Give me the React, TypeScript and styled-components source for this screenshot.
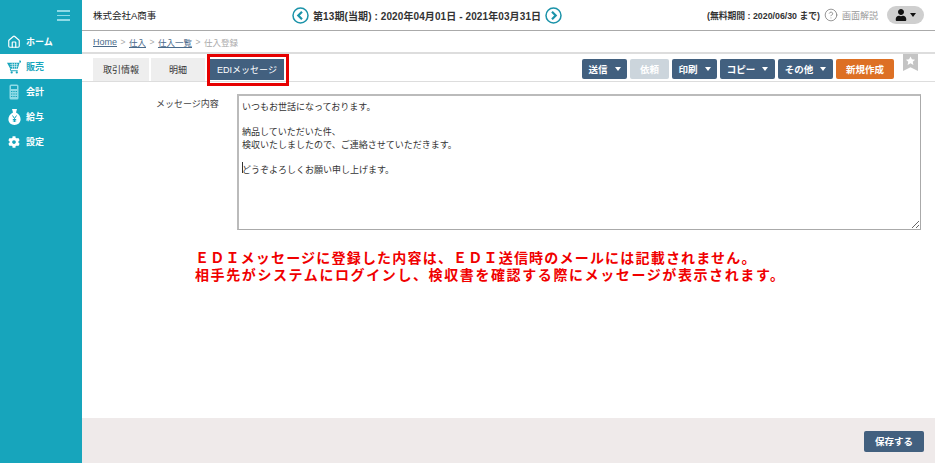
import React from "react";
import styled, { createGlobalStyle } from "styled-components";
import { Home, HelpCircle } from "lucide-react";
import { FaCog, FaUser } from "react-icons/fa";

const GlobalStyle = createGlobalStyle`
  html, body {
    margin: 0;
    padding: 0;
    background: #fff;
    font-family: "Liberation Sans", "Noto Sans CJK JP", sans-serif;
  }
  * { box-sizing: border-box; }
`;

const MoneyBag = () => (
  <svg width="13" height="16" viewBox="0 0 13 16">
    <path d="M4 0h5L8 3.400c2.800 1.200 4.600 3.900 4.600 6.900 0 3.400-2.700 5.700-6.100 5.700S.4 13.700.4 10.300c0-3 1.800-5.700 4.600-6.900z" fill="#fff" />
    <path d="M4.500 6.500l2 3 2-3M6.500 9.500v3.500M4.800 10.500h3.400M4.800 12h3.400" stroke="#17a5bc" strokeWidth="1" fill="none" />
  </svg>
);

const Cart = () => (
  <svg width="15" height="14" viewBox="0 0 15 14">
    <path d="M13 0.500l1.600.3-.9 1.700" fill="none" stroke="#17a5bc" strokeWidth="1.200" />
    <path d="M0 2.500h13.500L11.500 9H3.500z" fill="#17a5bc" />
    <path d="M3 4.500h9M3.500 6.500h8M5.500 2.500l.5 6.500M8 2.500V9M10.500 2.500L10 9" stroke="#fff" strokeWidth=".6" />
    <path d="M3.500 9l.5 2h7.500" fill="none" stroke="#17a5bc" strokeWidth="1" />
    <circle cx="5" cy="12.800" r="1.200" fill="#17a5bc" />
    <circle cx="10.500" cy="12.800" r="1.200" fill="#17a5bc" />
  </svg>
);

const Calculator = () => (
  <svg width="10" height="16" viewBox="0 0 10 16">
    <rect x=".5" y=".5" width="9" height="15" rx="1.500" fill="#8fdbe6" />
    <rect x="2" y="2" width="6" height="3" fill="#17a5bc" />
    <path d="M2 7.500h6M2 10h6M2 12.500h6" stroke="#17a5bc" strokeWidth="1" strokeDasharray="1.400 .9" />
  </svg>
);

const Arrow = ({ dir }: { dir: "left" | "right" }) => (
  <svg width="17" height="17" viewBox="0 0 17 17">
    <circle cx="8.500" cy="8.500" r="7.500" fill="#fff" stroke="#1b93a9" strokeWidth="1.500" />
    <path d={dir === "left" ? "M10 4.800L6.300 8.500 10 12.200" : "M7 4.800l3.700 3.700L7 12.200"} stroke="#1b93a9" strokeWidth="2.200" fill="none" />
  </svg>
);

const menu = [
  { label: "ホーム", icon: <Home size={16} strokeWidth={2} /> },
  { label: "販売", icon: <Cart />, active: true },
  { label: "会計", icon: <Calculator /> },
  { label: "給与", icon: <MoneyBag /> },
  { label: "設定", icon: <FaCog size={12} /> },
];

const message =
  "いつもお世話になっております。\n\n納品していただいた件、\n検収いたしましたので、ご連絡させていただきます。\n\nどうぞよろしくお願い申し上げます。";

const App = () => {
  return (
    <>
      <GlobalStyle />
      <Page>
        <Sidebar>
          <Burger>
            <span />
            <span />
            <span />
          </Burger>
          {menu.map((m) => (
            <MenuItem key={m.label} $active={m.active}>
              <MenuIcon>{m.icon}</MenuIcon>
              {m.label}
            </MenuItem>
          ))}
        </Sidebar>
        <Main>
          <Header>
            <Company>株式会社A商事</Company>
            <Period>
              <Arrow dir="left" />
              <PeriodText>第13期(当期) : 2020年04月01日 - 2021年03月31日</PeriodText>
              <Arrow dir="right" />
            </Period>
            <HeaderRight>
              <Trial>(無料期間 : 2020/06/30 まで)</Trial>
              <HelpCircle size={14} color="#777" strokeWidth={1.3} />
              <HelpLabel>画面解説</HelpLabel>
              <UserPill>
                <FaUser size={12} color="#111" />
                <Caret $color="#111" $gap={3} />
              </UserPill>
            </HeaderRight>
          </Header>
          <Breadcrumb>
            <a>Home</a>
            <i>&gt;</i>
            <a>仕入</a>
            <i>&gt;</i>
            <a>仕入一覧</a>
            <i>&gt;</i>
            <span>仕入登録</span>
          </Breadcrumb>
          <Toolbar>
            <Tab>取引情報</Tab>
            <Tab>明細</Tab>
            <ActiveTab>
              EDIメッセージ
              <Highlight />
            </ActiveTab>
            <Actions>
              <ActionButton $width={45}>送信<Caret /></ActionButton>
              <ActionButton $width={39} $disabled>依頼</ActionButton>
              <ActionButton $width={45}>印刷<Caret /></ActionButton>
              <ActionButton $width={55}>コピー<Caret /></ActionButton>
              <ActionButton $width={55}>その他<Caret /></ActionButton>
              <ActionButton $width={58} $orange>新規作成</ActionButton>
            </Actions>
            <Bookmark>
              <svg width="15" height="17" viewBox="0 0 16 18">
                <path d="M0 0h16v18l-8-4-8 4z" fill="#c4c4c4" />
                <path d="M8 2.500l1.500 3.100 3.400.4-2.500 2.300.7 3.300-3.100-1.700-3.100 1.700.7-3.300L3.100 6l3.400-.4z" fill="#fff" />
              </svg>
            </Bookmark>
          </Toolbar>
          <Content>
            <FormRow>
              <FieldLabel>メッセージ内容</FieldLabel>
              <AreaWrap>
                <MessageArea readOnly defaultValue={message} />
                <TextCaret />
              </AreaWrap>
            </FormRow>
            <Notice>
              <NoticeLine $spacing={1.2}>
                ＥＤＩメッセージに登録した内容は、ＥＤＩ送信時のメールには記載されません。
              </NoticeLine>
              <NoticeLine $spacing={1.6}>
                相手先がシステムにログインし、検収書を確認する際にメッセージが表示されます。
              </NoticeLine>
            </Notice>
          </Content>
          <Footer>
            <SaveButton>保存する</SaveButton>
          </Footer>
        </Main>
      </Page>
    </>
  );
};

const Page = styled.div`
  display: flex;
  width: 935px;
  height: 463px;
  overflow: hidden;
`;

const Sidebar = styled.div`
  width: 82px;
  flex: none;
  background: #17a5bc;
`;

const Burger = styled.div`
  display: flex;
  flex-direction: column;
  gap: 3px;
  width: 13px;
  margin: 10px 0 0 57px;
  height: 19px;

  span {
    display: block;
    height: 1.500px;
    background: #8fdbe6;
  }
`;

const MenuItem = styled.div<{ $active?: boolean }>`
  display: flex;
  align-items: center;
  height: 25px;
  padding-left: 7px;
  font-size: 9px;
  font-weight: bold;
  color: ${(p) => (p.$active ? "#17a5bc" : "#fff")};
  background: ${(p) => (p.$active ? "#fff" : "transparent")};
`;

const MenuIcon = styled.span`
  display: flex;
  align-items: center;
  justify-content: center;
  width: 14px;
  margin-right: 5px;
`;

const Main = styled.div`
  flex: 1;
  min-width: 0;
  display: flex;
  flex-direction: column;
`;

const Header = styled.div`
  display: flex;
  align-items: center;
  height: 31px;
  flex: none;
  padding: 0 11px;
  border-bottom: 1px solid #aaa;
`;

const Company = styled.div`
  width: 199px;
  flex: none;
  font-size: 9.500px;
  color: #222;
`;

const Period = styled.div`
  display: flex;
  align-items: center;
  gap: 4px;
`;

const PeriodText = styled.span`
  font-size: 10px;
  font-weight: bold;
  letter-spacing: 0.1px;
  color: #333;
  white-space: nowrap;
`;

const HeaderRight = styled.div`
  margin-left: auto;
  display: flex;
  align-items: center;
  gap: 4px;
`;

const Trial = styled.span`
  font-size: 8.800px;
  font-weight: bold;
  color: #333;
  white-space: nowrap;
`;

const HelpLabel = styled.span`
  font-size: 9px;
  color: #999;
  margin-right: 5px;
  white-space: nowrap;
`;

const UserPill = styled.div`
  display: flex;
  align-items: center;
  justify-content: center;
  width: 37px;
  height: 18px;
  border-radius: 9px;
  background: #cfcfcf;
`;

const Caret = styled.span<{ $color?: string; $gap?: number }>`
  display: inline-block;
  margin-left: ${(p) => p.$gap ?? 7}px;
  border-style: solid;
  border-width: 4px 3px 0;
  border-color: ${(p) => p.$color || "#fff"} transparent transparent;
`;

const Breadcrumb = styled.div`
  display: flex;
  align-items: center;
  gap: 3.500px;
  height: 23px;
  flex: none;
  padding-left: 11px;
  border-bottom: 2px solid #ddd;
  font-size: 8.500px;
  color: #aaa;

  a {
    color: #4a6a8a;
    text-decoration: underline;
  }
  a:first-child {
    font-size: 9px;
  }
  i {
    font-style: normal;
  }
`;

const Toolbar = styled.div`
  display: flex;
  align-items: flex-end;
  height: 28px;
  flex: none;
  padding: 0 17px 0 11px;
  border-bottom: 1px solid #ddd;
`;

const Tab = styled.div`
  display: flex;
  align-items: center;
  justify-content: center;
  width: 56px;
  height: 23px;
  margin-right: 2px;
  font-size: 9px;
  color: #333;
  background: #eee;
  &:nth-child(2) {
    width: 54px;
    margin-right: 5px;
  }
`;

const ActiveTab = styled.div`
  position: relative;
  display: flex;
  align-items: center;
  justify-content: center;
  width: 74px;
  height: 21px;
  margin-bottom: 1px;
  font-size: 9px;
  color: #fff;
  background: #42607f;
`;

const Highlight = styled.div`
  position: absolute;
  left: -3px;
  top: -5px;
  width: 82px;
  height: 32px;
  border: 3px solid #e60000;
`;

const Actions = styled.div`
  margin-left: auto;
  display: flex;
  gap: 3px;
  margin-bottom: 2px;
`;

const ActionButton = styled.div<{ $width: number; $disabled?: boolean; $orange?: boolean }>`
  display: flex;
  align-items: center;
  justify-content: center;
  width: ${(p) => p.$width}px;
  height: 20px;
  border-radius: 2px;
  font-size: 9.500px;
  font-weight: bold;
  color: #fff;
  background: ${(p) => (p.$orange ? "#dd7024" : p.$disabled ? "#ccd5dc" : "#42607f")};
`;

const Bookmark = styled.div`
  align-self: flex-start;
  margin-left: 9px;
  line-height: 0;
`;

const Content = styled.div`
  flex: 1;
  padding-top: 12px;
`;

const FormRow = styled.div`
  display: flex;
  padding: 0 14px 0 74px;
`;

const FieldLabel = styled.div`
  width: 81px;
  flex: none;
  padding-top: 3px;
  font-size: 9px;
  color: #444;
`;

const AreaWrap = styled.div`
  position: relative;
  flex: 1;
  display: flex;
`;

const MessageArea = styled.textarea`
  flex: 1;
  height: 136px;
  padding: 5px 3px;
  border: 1px solid #aaa;
  border-top: 2px solid #bbb;
  border-left: 2px solid #bbb;
  border-radius: 0;
  outline: none;
  font-family: "Liberation Sans", "Noto Sans CJK JP", sans-serif;
  font-size: 9px;
  line-height: 12.500px;
  color: #333;
`;

const TextCaret = styled.span`
  position: absolute;
  left: 5px;
  top: 68px;
  width: 1px;
  height: 11px;
  background: #333;
`;

const Notice = styled.div`
  margin: 20px 0 0 113px;
  color: #f00000;
`;

const NoticeLine = styled.div<{ $spacing: number }>`
  font-size: 14px;
  line-height: 17px;
  font-weight: bold;
  letter-spacing: ${(p) => p.$spacing}px;
  white-space: nowrap;
`;

const Footer = styled.div`
  display: flex;
  align-items: center;
  justify-content: flex-end;
  height: 45px;
  flex: none;
  padding: 1px 11px 0 0;
  background: #efeaea;
`;

const SaveButton = styled.div`
  display: flex;
  align-items: center;
  justify-content: center;
  width: 60px;
  height: 21px;
  border-radius: 2px;
  font-size: 9.500px;
  font-weight: bold;
  color: #fff;
  background: #42607f;
`;

export default App;
